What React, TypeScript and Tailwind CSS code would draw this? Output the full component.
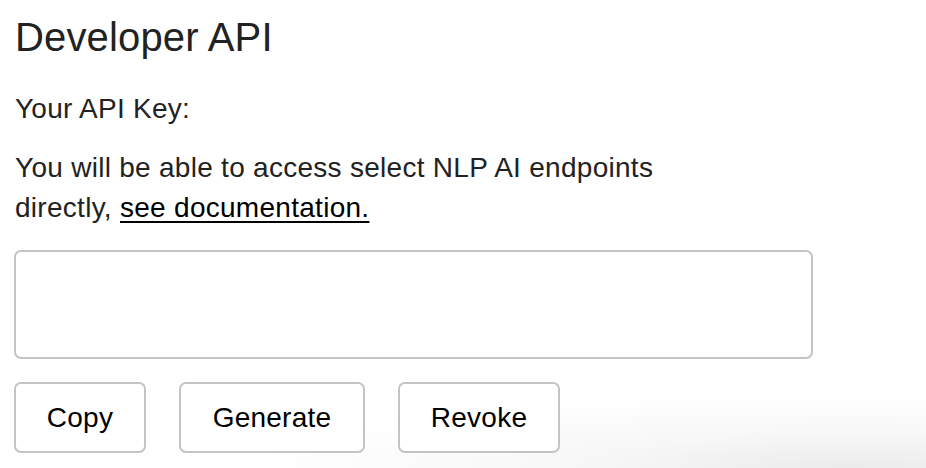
import { useState } from "react";

// Developer API settings panel: key field plus copy / generate / revoke actions
export default function App() {
  const [apiKey, setApiKey] = useState("");

  return (
    <div
      className="relative min-h-[468px] w-full overflow-hidden bg-white bg-[radial-gradient(ellipse_65%_16%_at_92%_100%,#ebebeb_0%,#f7f7f7_45%,#ffffff_100%)] pl-[15px] pt-[14px] text-[#222222]"
      style={{ fontFamily: '"Liberation Sans", Arial, Helvetica, sans-serif' }}
    >
      <h1 className="text-[40px] leading-[46px] font-normal tracking-[0.15px]">Developer API</h1>

      <p className="mt-[29px] text-[28px] leading-[40px] tracking-[0.25px]">Your API Key:</p>

      <p className="mt-[19px] max-w-[700px] text-[28px] leading-[40px] tracking-[0.28px]">
        You will be able to access select NLP AI endpoints directly,{" "}
        <a href="#" className="text-black underline underline-offset-[4px] decoration-[2px]">
          see documentation.
        </a>
      </p>

      <textarea
        value={apiKey}
        onChange={(e) => setApiKey(e.target.value)}
        className="mt-[22px] -ml-px block h-[109px] w-[799px] resize-none rounded-[7px] border-2 border-[#c4c4c4] bg-white px-3 py-2 text-[24px] outline-none"
      />

      <div className="mt-[23px] -ml-px flex items-start text-[28px] tracking-[0.25px] text-black">
        <button className="h-[71px] w-[132px] rounded-[7px] border-2 border-[#c4c4c4] bg-white">
          Copy
        </button>
        <button className="ml-[33px] h-[71px] w-[186px] rounded-[7px] border-2 border-[#c4c4c4] bg-white">
          Generate
        </button>
        <button className="ml-[33px] h-[71px] w-[162px] rounded-[7px] border-2 border-[#c4c4c4] bg-white">
          Revoke
        </button>
      </div>
    </div>
  );
}
